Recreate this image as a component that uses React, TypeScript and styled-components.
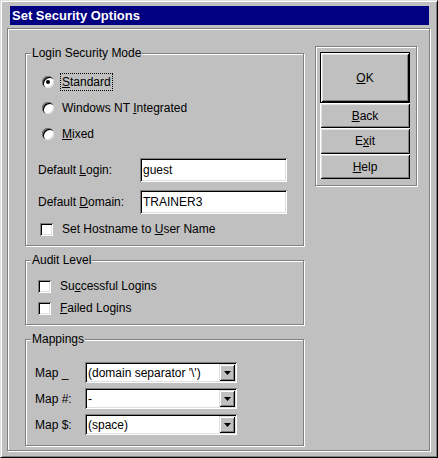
import React from 'react';
import styled, { createGlobalStyle } from 'styled-components';

const GlobalStyle = createGlobalStyle`
  html, body {
    margin: 0;
    padding: 0;
    background: #c0c0c0;
  }
  body {
    font-family: "Liberation Sans", Arial, sans-serif;
    font-size: 12px;
    color: #000;
  }
`;

const Window = styled.div`
  box-sizing: border-box;
  width: 438px;
  height: 458px;
  display: flex;
  flex-direction: column;
  padding: 5px 7px 6px 6px;
  background: #c0c0c0;
  border: 1px solid;
  border-color: #dfdfdf #000 #000 #dfdfdf;
  box-shadow: inset 1px 1px #fff, inset -1px -1px #808080;
`;

const TitleBar = styled.div`
  height: 19px;
  margin: 0 1px 0 3px;
  padding-left: 2px;
  display: flex;
  align-items: center;
  background: #000080;
  color: #fff;
  font-weight: bold;
  font-size: 13px;
`;

const ClientFrame = styled.div`
  flex: 1;
  margin-top: 3px;
  display: flex;
  align-items: flex-start;
  gap: 11px;
  padding: 17px 12px 0 17px;
  border: 1px solid #808080;
  box-shadow: inset 1px 1px #fff, 1px 1px #fff;
`;

const LeftColumn = styled.div`
  width: 279px;
  display: flex;
  flex-direction: column;
  gap: 7px;
`;

const Group = styled.fieldset`
  margin: 0;
  padding: 0;
  min-width: 0;
  border: 1px solid #808080;
  box-shadow: inset 1px 1px #fff, 1px 1px #fff;
`;

const Legend = styled.legend`
  margin-left: 5px;
  padding: 0 1px;
  line-height: 14px;
  background: #c0c0c0;
`;

const GroupBody = styled.div<{ $pad: string }>`
  display: flex;
  flex-direction: column;
  padding: ${(p) => p.$pad};
`;

const OptionRow = styled.div<{ $h: number; $indent?: number; $gap: number; $mt?: number }>`
  height: ${(p) => p.$h}px;
  margin-top: ${(p) => p.$mt ?? 0}px;
  padding-left: ${(p) => p.$indent ?? 0}px;
  display: flex;
  align-items: center;
  gap: ${(p) => p.$gap}px;
`;

const Radio = styled.span<{ $checked?: boolean }>`
  position: relative;
  width: 12px;
  height: 12px;
  flex: none;
  border-radius: 50%;
  background: #fff;
  box-shadow: inset 1px 1px 0 #808080, inset 2px 2px 0 #000, inset -1px -1px 0 #dfdfdf;
  &::after {
    content: '';
    display: ${(p) => (p.$checked ? 'block' : 'none')};
    position: absolute;
    left: 4px;
    top: 4px;
    width: 4px;
    height: 4px;
    border-radius: 50%;
    background: #000;
  }
`;

const Checkbox = styled.span`
  width: 13px;
  height: 13px;
  flex: none;
  background: #fff;
  box-shadow: inset 1px 1px #808080, inset -1px -1px #fff, inset 2px 2px #000, inset -2px -2px #dfdfdf;
`;

const OptionText = styled.span<{ $focused?: boolean }>`
  padding: 1px;
  border: 1px dotted ${(p) => (p.$focused ? '#000' : 'transparent')};
  line-height: 14px;
`;

const FieldRow = styled.div<{ $mt: number }>`
  margin-top: ${(p) => p.$mt}px;
  display: flex;
  align-items: center;
`;

const FieldLabel = styled.span<{ $w: number }>`
  width: ${(p) => p.$w}px;
  flex: none;
`;

const TextBox = styled.input`
  box-sizing: border-box;
  width: 147px;
  height: 24px;
  margin: 0;
  padding: 0 0 0 3px;
  border: none;
  outline: none;
  background: #fff;
  font: inherit;
  color: #000;
  box-shadow: inset 1px 1px #808080, inset -1px -1px #fff, inset 2px 2px #000, inset -2px -2px #dfdfdf;
`;

const Combo = styled.div`
  box-sizing: border-box;
  width: 152px;
  height: 21px;
  display: flex;
  align-items: center;
  justify-content: space-between;
  padding: 2px 2px 2px 3px;
  background: #fff;
  box-shadow: inset 1px 1px #808080, inset -1px -1px #fff, inset 2px 2px #000, inset -2px -2px #dfdfdf;
`;

const DropButton = styled.span`
  width: 16px;
  height: 17px;
  display: flex;
  align-items: center;
  justify-content: center;
  background: #c0c0c0;
  box-shadow: inset 1px 1px #dfdfdf, inset -1px -1px #000, inset 2px 2px #fff, inset -2px -2px #808080;
`;

const ButtonPanel = styled.div`
  box-sizing: border-box;
  width: 102px;
  display: flex;
  flex-direction: column;
  padding: 5px 6px 6px 4px;
  border: 1px solid #808080;
  box-shadow: inset 1px 1px #fff, 1px 1px #fff;
`;

const Button = styled.button<{ $h: number; $default?: boolean }>`
  box-sizing: border-box;
  height: ${(p) => p.$h}px;
  margin: 0;
  padding: 0;
  font: inherit;
  color: #000;
  background: #c0c0c0;
  border: ${(p) => (p.$default ? '1px solid #000' : 'none')};
  box-shadow: inset 1px 1px #fff, inset -1px -1px #000, inset 2px 2px #dfdfdf, inset -2px -2px #808080;
`;

const Arrow = () => (
  <svg width="7" height="4" viewBox="0 0 7 4">
    <path d="M0 0h7L3.5 4z" fill="#000" />
  </svg>
);

const maps = [
  { label: 'Map _', value: "(domain separator '\\')" },
  { label: 'Map #:', value: '-' },
  { label: 'Map $:', value: '(space)' },
];

export default function App() {
  return (
    <>
      <GlobalStyle />
      <Window>
        <TitleBar>Set Security Options</TitleBar>
        <ClientFrame>
          <LeftColumn>
            <Group>
              <Legend>Login Security Mode</Legend>
              <GroupBody $pad="9px 12px 6px 12px">
                <OptionRow $h={26} $indent={4} $gap={6}>
                  <Radio $checked />
                  <OptionText $focused>
                    <u>S</u>tandard
                  </OptionText>
                </OptionRow>
                <OptionRow $h={26} $indent={4} $gap={6}>
                  <Radio />
                  <OptionText>
                    Windows NT <u>I</u>ntegrated
                  </OptionText>
                </OptionRow>
                <OptionRow $h={26} $indent={4} $gap={6}>
                  <Radio />
                  <OptionText>
                    <u>M</u>ixed
                  </OptionText>
                </OptionRow>
                <FieldRow $mt={11}>
                  <FieldLabel $w={102}>
                    Default <u>L</u>ogin:
                  </FieldLabel>
                  <TextBox defaultValue="guest" readOnly />
                </FieldRow>
                <FieldRow $mt={8}>
                  <FieldLabel $w={102}>
                    Default <u>D</u>omain:
                  </FieldLabel>
                  <TextBox defaultValue="TRAINER3" readOnly />
                </FieldRow>
                <OptionRow $h={20} $indent={2} $gap={7} $mt={5}>
                  <Checkbox />
                  <OptionText>
                    Set Hostname to <u>U</u>ser Name
                  </OptionText>
                </OptionRow>
              </GroupBody>
            </Group>

            <Group>
              <Legend>Audit Level</Legend>
              <GroupBody $pad="8px 12px 5px 12px">
                <OptionRow $h={22} $gap={7}>
                  <Checkbox />
                  <OptionText>
                    Su<u>c</u>cessful Logins
                  </OptionText>
                </OptionRow>
                <OptionRow $h={22} $gap={7}>
                  <Checkbox />
                  <OptionText>
                    <u>F</u>ailed Logins
                  </OptionText>
                </OptionRow>
              </GroupBody>
            </Group>

            <Group>
              <Legend>Mappings</Legend>
              <GroupBody $pad="16px 9px 10px 9px">
                {maps.map((m, i) => (
                  <FieldRow key={m.label} $mt={i === 0 ? 0 : 5}>
                    <FieldLabel $w={50}>{m.label}</FieldLabel>
                    <Combo>
                      <span>{m.value}</span>
                      <DropButton>
                        <Arrow />
                      </DropButton>
                    </Combo>
                  </FieldRow>
                ))}
              </GroupBody>
            </Group>
          </LeftColumn>

          <ButtonPanel>
            <Button $h={51} $default>
              <u>O</u>K
            </Button>
            <Button $h={25}>
              <u>B</u>ack
            </Button>
            <Button $h={26}>
              E<u>x</u>it
            </Button>
            <Button $h={25}>
              <u>H</u>elp
            </Button>
          </ButtonPanel>
        </ClientFrame>
      </Window>
    </>
  );
}
